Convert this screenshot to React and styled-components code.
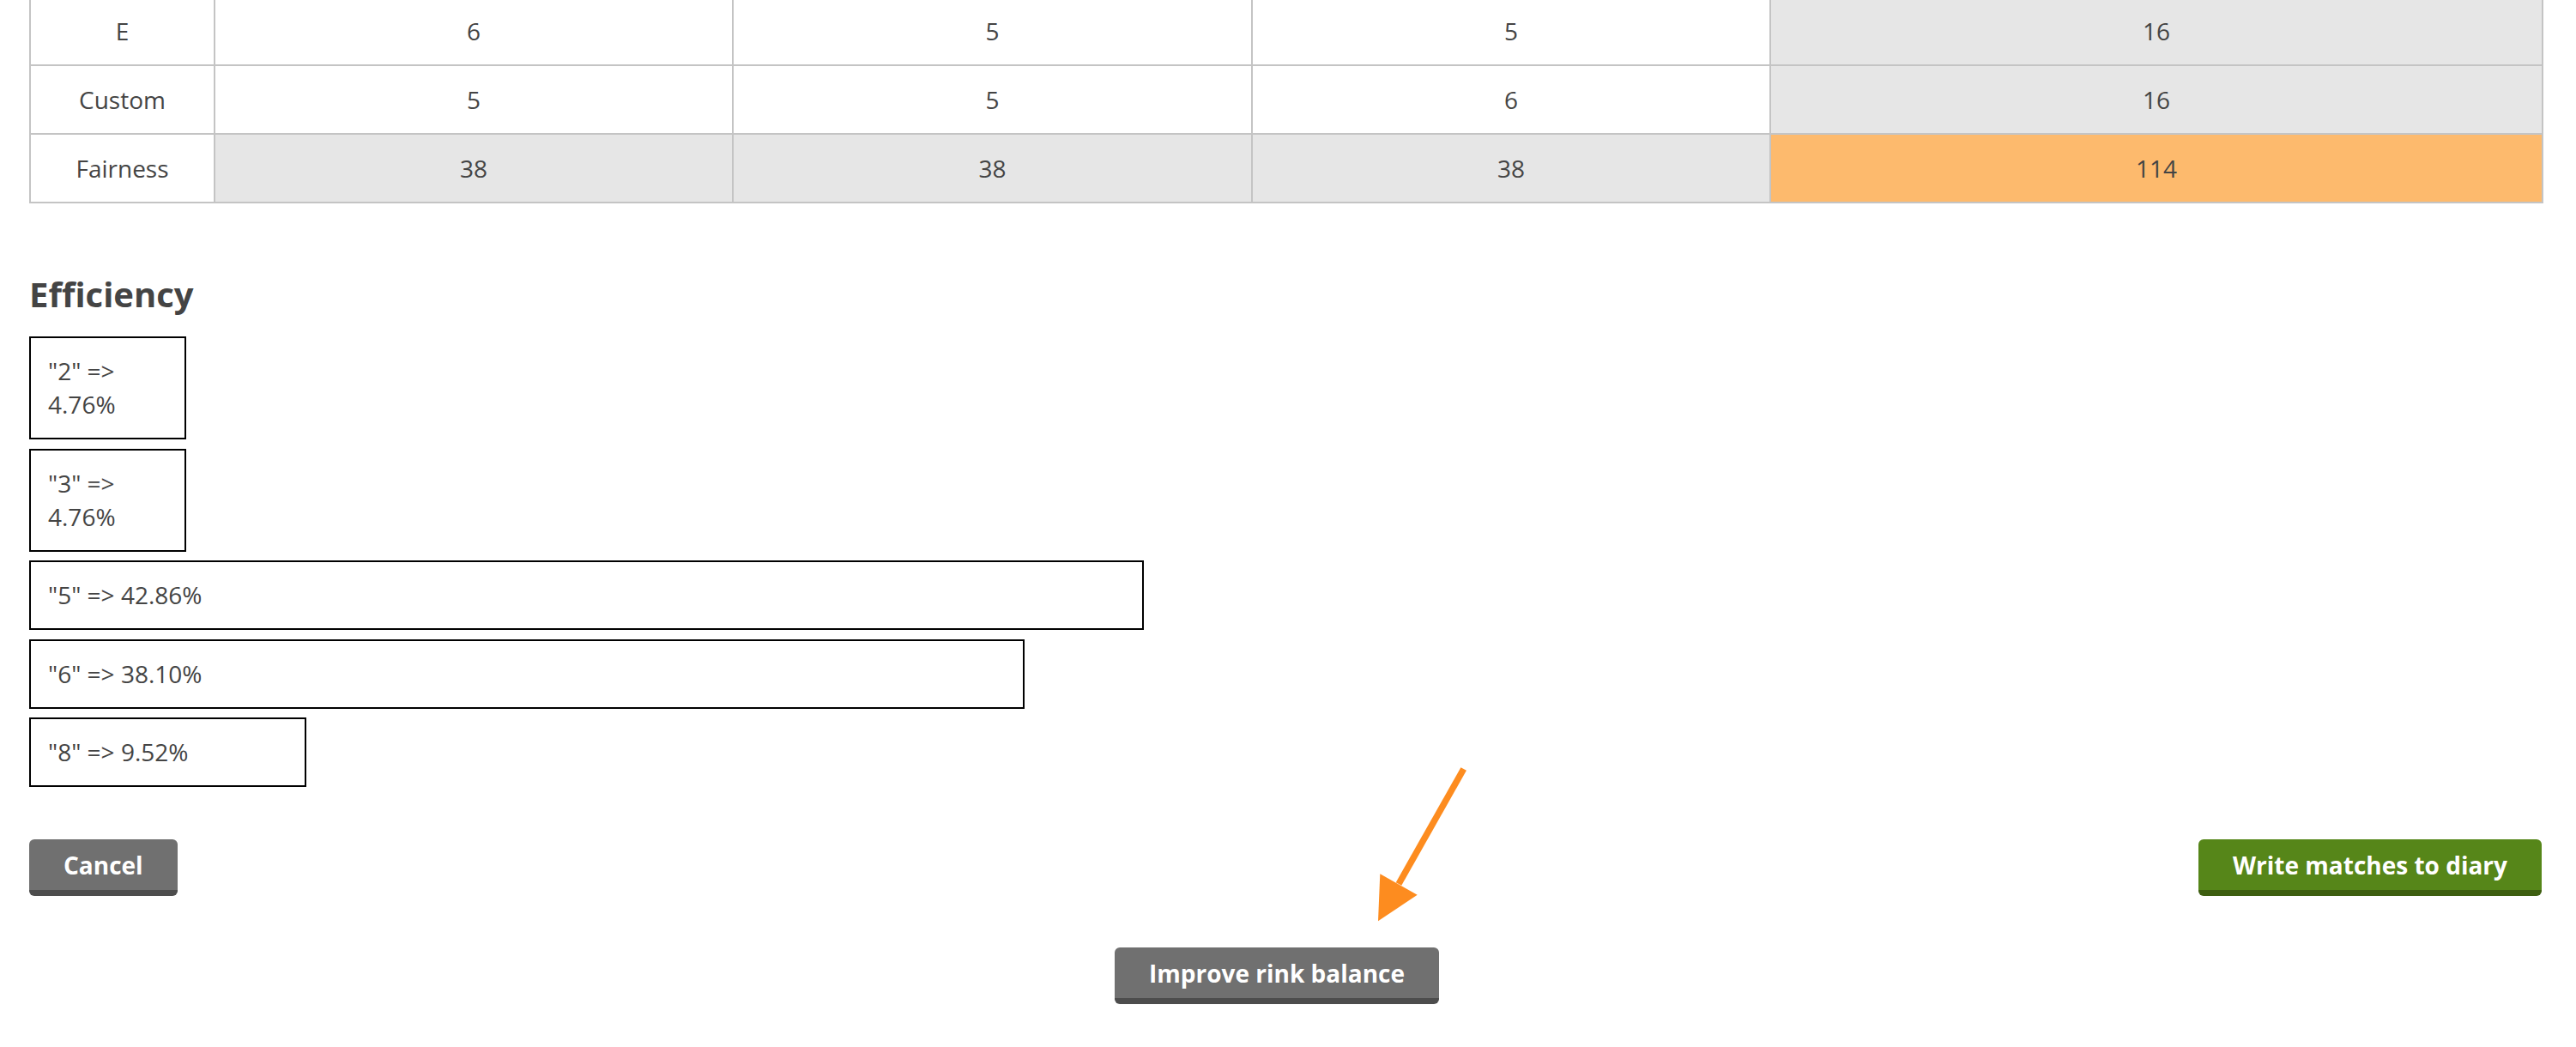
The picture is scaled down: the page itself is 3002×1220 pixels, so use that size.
import React from "react";
import styled, { createGlobalStyle } from "styled-components";

const GlobalStyle = createGlobalStyle`
  html, body {
    margin: 0;
    padding: 0;
    background: #fff;
  }
  body {
    font-family: "Open Sans", "Liberation Sans", sans-serif;
    font-size: 28px;
    color: #444;
  }
`;

const rows = [
  { label: "E", values: [6, 5, 5], total: 16 },
  { label: "Custom", values: [5, 5, 6], total: 16 },
];
const fairness = { label: "Fairness", values: [38, 38, 38], total: 114 };

const efficiency = [
  { key: "2", pct: 4.76 },
  { key: "3", pct: 4.76 },
  { key: "5", pct: 42.86 },
  { key: "6", pct: 38.1 },
  { key: "8", pct: 9.52 },
];

const colWidths = [215, 604, 605, 604, 900];

const App = () => {
  return (
    <Page>
      <GlobalStyle />
      <Table>
        <colgroup>
          {colWidths.map((w, i) => (
            <col key={i} style={{ width: w }} />
          ))}
        </colgroup>
        <tbody>
          {rows.map((r) => (
            <Row key={r.label}>
              <Cell>{r.label}</Cell>
              {r.values.map((v, i) => (
                <Cell key={i}>{v}</Cell>
              ))}
              <Cell $tone="grey">{r.total}</Cell>
            </Row>
          ))}
          <Row>
            <Cell>{fairness.label}</Cell>
            {fairness.values.map((v, i) => (
              <Cell key={i} $tone="grey">{v}</Cell>
            ))}
            <Cell $tone="warn">{fairness.total}</Cell>
          </Row>
        </tbody>
      </Table>

      <Heading>Efficiency</Heading>
      <EffList>
        {efficiency.map((e) => (
          <EffBox key={e.key} style={{ width: `${e.pct}%` }}>
            "{e.key}" =&gt; {e.pct.toFixed(2)}%
          </EffBox>
        ))}
      </EffList>

      <ActionRow>
        <Button>Cancel</Button>
        <Button $variant="go">Write matches to diary</Button>
      </ActionRow>
      <CenterRow>
        <Button>Improve rink balance</Button>
      </CenterRow>

      <Arrow width="130" height="200" viewBox="0 0 130 200">
        <line x1="115.7" y1="16" x2="40" y2="150" stroke="#fd8c1f" strokeWidth="7.5" />
        <polygon points="18.3,138.3 61.7,162.7 16,193.3" fill="#fd8c1f" />
      </Arrow>
    </Page>
  );
};
export default App;

const Page = styled.div`
  position: relative;
  display: flow-root;
  padding: 0 40px 0 34px;
  min-height: 1220px;
  box-sizing: border-box;
`;

const Table = styled.table`
  width: 100%;
  margin-top: -5px;
  border-collapse: collapse;
  table-layout: fixed;
  border: 2px solid #c4c4c4;
`;

const Row = styled.tr`
  height: 80px;
`;

const toneColors = {
  grey: "#e6e6e6",
  warn: "#fdba6d",
};

const Cell = styled.td`
  padding: 0;
  border: 2px solid #c4c4c4;
  text-align: center;
  vertical-align: middle;
  line-height: 39px;
  background: ${(p) => toneColors[p.$tone] || "#fff"};
`;

const Heading = styled.h3`
  margin: 84px 0 27px;
  font-size: 40px;
  line-height: 44px;
  font-weight: 700;
  color: #444;
`;

const EffList = styled.div`
  display: flex;
  flex-direction: column;
  align-items: flex-start;
  gap: 10.5px;
`;

const EffBox = styled.div`
  box-sizing: content-box;
  padding: 19px 20px;
  border: 2px solid #000;
  line-height: 39px;
`;

const ActionRow = styled.div`
  display: flex;
  justify-content: space-between;
  margin-top: 61px;
`;

const CenterRow = styled.div`
  display: flex;
  justify-content: center;
  padding-right: 20px;
  margin-top: 60px;
`;

const Button = styled.button`
  padding: 11px 40px 9px;
  border: none;
  border-bottom: 7px solid ${(p) => (p.$variant === "go" ? "#3d5e10" : "#4d4d4d")};
  border-radius: 6px;
  background: ${(p) => (p.$variant === "go" ? "#568619" : "#707070")};
  color: #fff;
  font-family: "Open Sans", "Liberation Sans", sans-serif;
  font-size: 28px;
  font-weight: 700;
  line-height: 39px;
  cursor: pointer;
`;

const Arrow = styled.svg`
  position: absolute;
  left: 1590px;
  top: 880px;
  overflow: visible;
`;
